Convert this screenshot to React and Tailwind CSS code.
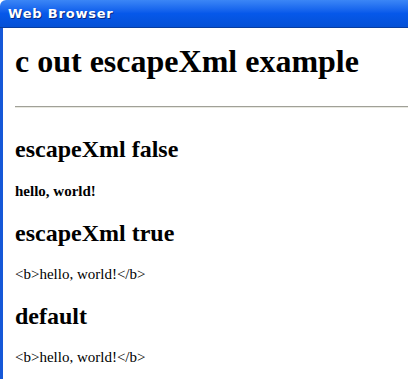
import React from 'react';

const serif = "font-['Liberation_Serif',serif]";

const App = () => {
  return (
    <div className="w-[408px] h-[379px] overflow-hidden bg-white flex flex-col">
      <div className="h-[28px] shrink-0 rounded-tl-[6px] bg-gradient-to-b from-[#3b86f6] via-[#0658ea] to-[#0450d6] border-b border-[#083da0] flex items-center pl-[8px]">
        <span className="text-white font-bold text-[13px] font-['DejaVu_Sans',sans-serif] tracking-[0.8px] [text-shadow:1px_1px_0_#0a2a80]">
          Web Browser
        </span>
      </div>
      <div className="flex-1 flex">
        <div className="w-[3px] bg-[#1658d8]" />
        <div className={`flex-1 pl-[12px] text-black ${serif}`}>
          <h1 className="mt-[15px] text-[32px] leading-[37px] font-bold">c out escapeXml example</h1>
          <hr className="mt-[26px] border-t border-b border-t-[#a0a098] border-b-[#e8e8e0]" />
          <h2 className="mt-[27px] text-[24px] leading-[28px] font-bold">escapeXml false</h2>
          <p className="mt-[19px] text-[15px] leading-[18px] font-bold">hello, world!</p>
          <h2 className="mt-[19px] text-[24px] leading-[28px] font-bold">escapeXml true</h2>
          <p className="mt-[18px] text-[15px] leading-[18px]">&lt;b&gt;hello, world!&lt;/b&gt;</p>
          <h2 className="mt-[19px] text-[24px] leading-[28px] font-bold">default</h2>
          <p className="mt-[18px] text-[15px] leading-[18px]">&lt;b&gt;hello, world!&lt;/b&gt;</p>
        </div>
      </div>
    </div>
  );
};

export default App;
